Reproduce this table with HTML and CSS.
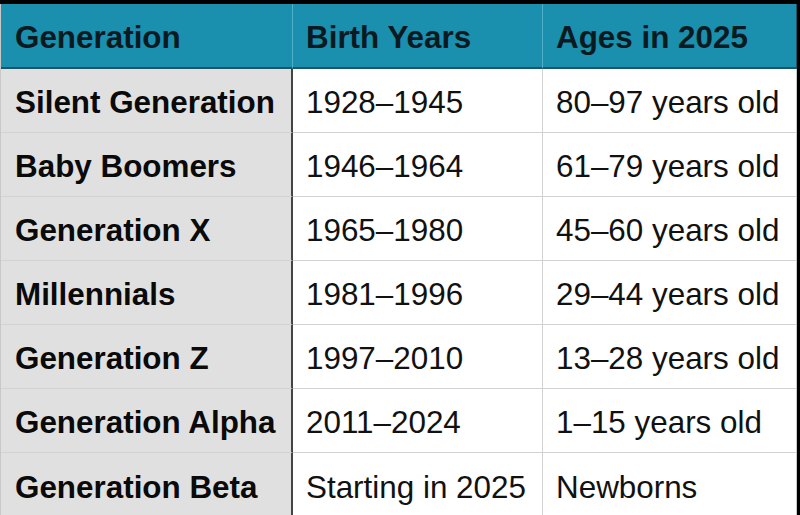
FILE: index.html
```html
<!DOCTYPE html>
<html>
<head>
<meta charset="utf-8">
<link rel="stylesheet" href="styles.css">
</head>
<body>
<div class="frame">
  <div class="table">
    <div class="cell head c1">Generation</div>
    <div class="cell head c2">Birth Years</div>
    <div class="cell head c3">Ages in 2025</div>

    <div class="cell name c1">Silent Generation</div>
    <div class="cell c2">1928–1945</div>
    <div class="cell c3">80–97 years old</div>

    <div class="cell name c1">Baby Boomers</div>
    <div class="cell c2">1946–1964</div>
    <div class="cell c3">61–79 years old</div>

    <div class="cell name c1">Generation X</div>
    <div class="cell c2">1965–1980</div>
    <div class="cell c3">45–60 years old</div>

    <div class="cell name c1">Millennials</div>
    <div class="cell c2">1981–1996</div>
    <div class="cell c3">29–44 years old</div>

    <div class="cell name c1">Generation Z</div>
    <div class="cell c2">1997–2010</div>
    <div class="cell c3">13–28 years old</div>

    <div class="cell name c1">Generation Alpha</div>
    <div class="cell c2">2011–2024</div>
    <div class="cell c3">1–15 years old</div>

    <div class="cell name c1 last">Generation Beta</div>
    <div class="cell c2 last">Starting in 2025</div>
    <div class="cell c3 last">Newborns</div>
  </div>
</div>
</body>
</html>
```
FILE: styles.css
```css
html, body {
  margin: 0;
  padding: 0;
  background: #000;
}
.frame {
  width: 800px;
  height: 515px;
  padding: 4px 4px 0 0;
  box-sizing: border-box;
  overflow: hidden;
}
.table {
  display: grid;
  grid-template-columns: 292px 250px 254px;
  grid-template-rows: 65px repeat(7, 64px);
  background: #fff;
  border-left: 1px solid #c8c8c8;
  font-family: "Liberation Sans", Arial, sans-serif;
  font-size: 31.4px;
  color: #111;
}
.cell {
  display: flex;
  align-items: center;
  padding-left: 14px;
  box-sizing: border-box;
  border-bottom: 1px solid #d2d2d2;
  border-right: 1px solid #d2d2d2;
  white-space: nowrap;
  padding-top: 5px;
}
.head {
  background: #1a8fae;
  font-weight: bold;
  color: #0b1a20;
  border-bottom: 2px solid #1c5566;
  border-right: 1px solid #4fb0c8;
  padding-top: 5px;
}
.name {
  background: #e0e0e0;
  font-weight: bold;
  color: #0a0a0a;
}
.c1:not(.head) {
  border-right: 2px solid #444;
}
.c3 {
  border-right: 1px solid #c8c8c8;
}
.c3.head {
  border-right: 1px solid #1c5566;
}
.c2, .c3 {
  padding-left: 13px;
}
.last {
  border-bottom: none;
}
```
